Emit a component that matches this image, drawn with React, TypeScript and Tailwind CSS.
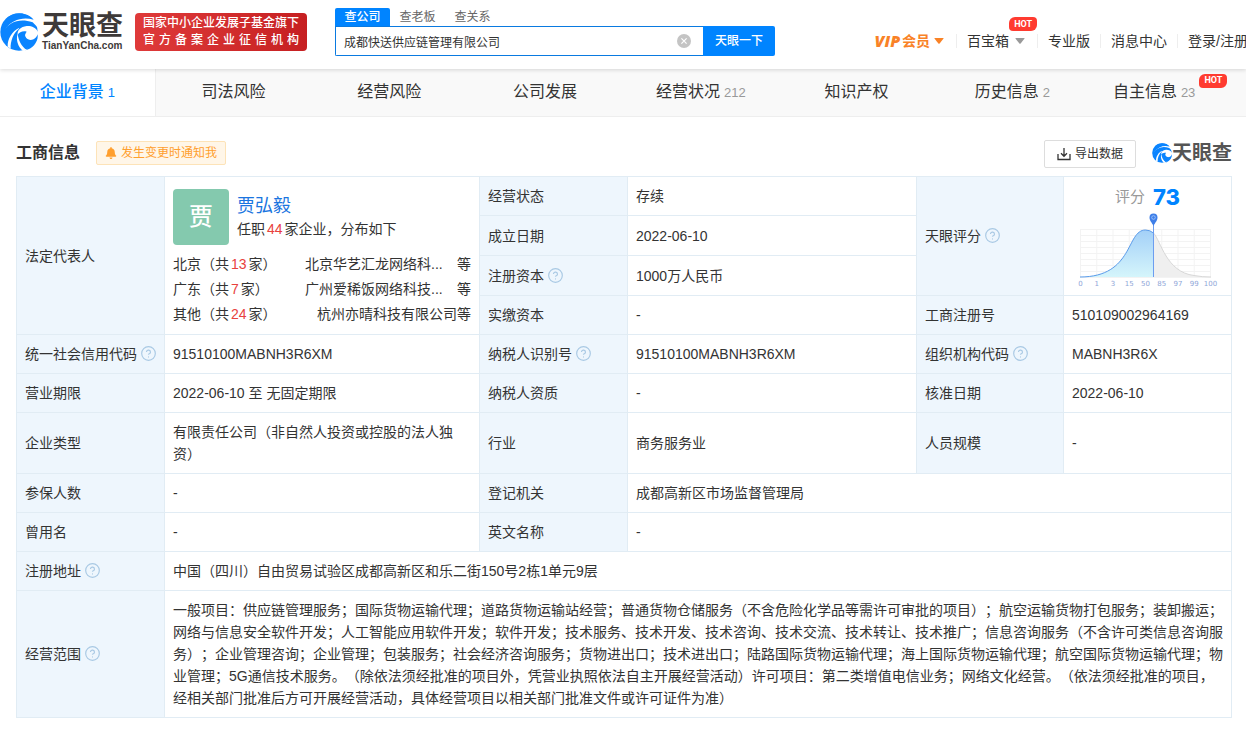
import React from "react";
import { HelpCircle } from "lucide-react";
import { FaBell } from "react-icons/fa";

const tabs = [
  { name: "企业背景", count: "1" },
  { name: "司法风险" },
  { name: "经营风险" },
  { name: "公司发展" },
  { name: "经营状况", count: "212" },
  { name: "知识产权" },
  { name: "历史信息", count: "2" },
  { name: "自主信息", count: "23", hot: true },
];

const regions = [
  { area: "北京", total: 13, company: "北京华艺汇龙网络科..." },
  { area: "广东", total: 7, company: "广州爱稀饭网络科技..." },
  { area: "其他", total: 24, company: "杭州亦晴科技有限公司", full: true },
];

const scope =
  "一般项目：供应链管理服务；国际货物运输代理；道路货物运输站经营；普通货物仓储服务（不含危险化学品等需许可审批的项目）；航空运输货物打包服务；装卸搬运；网络与信息安全软件开发；人工智能应用软件开发；软件开发；技术服务、技术开发、技术咨询、技术交流、技术转让、技术推广；信息咨询服务（不含许可类信息咨询服务）；企业管理咨询；企业管理；包装服务；社会经济咨询服务；货物进出口；技术进出口；陆路国际货物运输代理；海上国际货物运输代理；航空国际货物运输代理；物业管理；5G通信技术服务。（除依法须经批准的项目外，凭营业执照依法自主开展经营活动）许可项目：第二类增值电信业务；网络文化经营。（依法须经批准的项目，经相关部门批准后方可开展经营活动，具体经营项目以相关部门批准文件或许可证件为准）";

function LogoMark({ className }: { className: string }) {
  return (
    <svg viewBox="0 0 114 114" className={className} aria-hidden="true">
      <circle cx="57" cy="57" r="56" fill="#0a84ff" />
      <path d="M12 52C28 28 58 14 98 28L114 44V0L98 17C64 8 32 20 12 52Z" fill="#fff" />
      <path d="M20 15C46 -6 84 -2 101 20C66 10 36 22 14 48Z" fill="#0a84ff" />
      <path d="M114 56C108 44 94 38 80 39C62 41 51 52 53 66C58 57 69 53 80 56C74 61 73 70 78 76C86 86 102 86 114 74Z" fill="#fff" />
      <path d="M80 56C73 62 73 73 84 79C96 85 109 77 113 64C116 86 98 107 76 112C88 103 88 94 77 86C66 78 67 64 80 56Z" fill="#0a84ff" />
      <path d="M58 44C36 54 22 78 23 101L32 107C31 84 40 61 56 48Z" fill="#fff" />
      <path d="M53 62C47 80 54 101 68 113L80 111C64 99 55 82 53 62Z" fill="#fff" />
    </svg>
  );
}

function Hot({ className }: { className: string }) {
  return (
    <span
      className={`absolute flex h-3.5 w-7 items-center justify-center rounded-sm rounded-tl-md rounded-br-md bg-[#ff3b30] font-[Roboto] text-[9px] font-bold text-white ${className}`}
    >
      HOT
    </span>
  );
}

function Caret({ className }: { className: string }) {
  return (
    <svg viewBox="0 0 10 6" className={`h-1.5 w-2.5 ${className}`} aria-hidden="true">
      <path d="M1 0h8q1 0 .4.8L5.6 5.5q-.6.7-1.2 0L.6.8Q0 0 1 0z" fill="currentColor" />
    </svg>
  );
}

function Header() {
  return (
    <header className="relative z-10 flex h-[69px] bg-white shadow-[0_1px_4px_rgba(0,0,0,0.15)]">
      <a href="#" className="mt-[13px] flex h-[38px] w-[124px] shrink-0 items-center gap-1">
        <LogoMark className="size-[38px] shrink-0" />
        <span className="flex flex-col text-[#3e3a39]">
          <span className="text-[27px] leading-[27px] font-bold">天眼查</span>
          <span className="text-[10px] leading-[11px] font-bold">TianYanCha.com</span>
        </span>
      </a>
      <div className="mt-[13px] ml-[11px] flex h-[38px] w-[172px] shrink-0 flex-col justify-center rounded-sm bg-linear-to-r from-[#df3a3a] to-[#c61f21] px-2 text-xs leading-[17px] font-medium text-white">
        <span className="whitespace-nowrap">国家中小企业发展子基金旗下</span>
        <span className="[text-align-last:justify]">官方备案企业征信机构</span>
      </div>

      <form className="mt-2 ml-7 w-[440px] shrink-0 text-xs" onSubmit={(e) => e.preventDefault()}>
        <div className="flex h-[18px] text-[#666]">
          <button type="button" className="w-[55px] rounded-t-xs bg-[#0084ff] font-medium text-white">
            查公司
          </button>
          <button type="button" className="w-[55px]">
            查老板
          </button>
          <button type="button" className="w-[55px]">
            查关系
          </button>
        </div>
        <div className="flex h-[30px]">
          <div className="flex flex-1 items-center rounded-bl-xs border border-r-0 border-[#0a7ae0] pr-3 pl-2">
            <input
              type="text"
              aria-label="公司名称"
              defaultValue="成都快送供应链管理有限公司"
              className="h-full min-w-0 flex-1 text-[#333] outline-none"
            />
            <button type="button" aria-label="清除">
              <svg viewBox="0 0 14 14" className="size-3.5">
                <circle cx="7" cy="7" r="7" fill="#c4c4c4" />
                <path d="M4.4 4.4l5.2 5.2M9.6 4.4l-5.2 5.2" stroke="#fff" strokeWidth="1.2" />
              </svg>
            </button>
          </div>
          <button type="submit" className="w-[72px] rounded-r-xs bg-[#0084ff] font-medium text-white">
            天眼一下
          </button>
        </div>
      </form>

      <nav className="-mr-0.5 ml-auto flex shrink-0 items-center pt-3 text-sm whitespace-nowrap text-[#333]">
        <a href="#" className="mr-3 flex items-center font-bold text-[#f98226]">
          <span className="mr-0.5 font-['Open_Sans'] text-base leading-5 font-extrabold italic">VIP</span>
          会员
          <Caret className="ml-1" />
        </a>
        <a href="#" className="relative flex items-center border-l border-[#eee] pr-3 pl-2.5 leading-3.5">
          百宝箱
          <Caret className="ml-1.5 text-[#999]" />
          <Hot className="-top-[17px] right-0" />
        </a>
        <a href="#" className="border-l border-[#eee] px-2.5 leading-3.5">
          专业版
        </a>
        <a href="#" className="border-l border-[#eee] px-2.5 leading-3.5">
          消息中心
        </a>
        <a href="#" className="border-l border-[#eee] pl-2.5 leading-3.5">
          登录/注册
        </a>
      </nav>
    </header>
  );
}

function TabBar() {
  return (
    <nav className="grid h-12 grid-cols-8 border-b border-[#eee] bg-[#f9f9f9] text-base text-[#333]">
      {tabs.map((tab, i) => (
        <a
          key={tab.name}
          href="#"
          className={`flex items-center justify-center pb-0.5 ${
            i === 0 ? "border-r border-[#eee] bg-white font-medium text-[#0084ff]" : ""
          }`}
        >
          <span className={`relative ${tab.hot ? "mr-7" : ""}`}>
            {tab.name}
            {tab.count && (
              <span className={`ml-1 text-[13px] font-normal ${i === 0 ? "" : "text-[#999]"}`}>
                {tab.count}
              </span>
            )}
            {tab.hot && <Hot className="-top-1.5 left-full ml-1" />}
          </span>
        </a>
      ))}
    </nav>
  );
}

function Th({ children, help, rowSpan }: { children: React.ReactNode; help?: boolean; rowSpan?: number }) {
  return (
    <th
      scope="row"
      rowSpan={rowSpan}
      className="border border-[#e1ecf4] bg-[#eef6fd] px-2 py-2 text-left font-normal whitespace-nowrap"
    >
      {children}
      {help && (
        <HelpCircle
          viewBox="1 1 22 22"
          className="mb-[3px] ml-1 inline size-[15px] text-[#a9c9e4]"
          strokeWidth={1.7}
        />
      )}
    </th>
  );
}

function Td({ children, colSpan, rowSpan }: { children: React.ReactNode; colSpan?: number; rowSpan?: number }) {
  return (
    <td colSpan={colSpan} rowSpan={rowSpan} className="border border-[#e1ecf4] px-2 py-2">
      {children}
    </td>
  );
}

function Representative() {
  return (
    <div className="h-[141px] pt-1">
      <div className="flex gap-2">
        <div className="flex size-14 items-center justify-center rounded-sm bg-[#84c9ae] text-2xl font-medium text-white">
          贾
        </div>
        <div className="pt-[5px]">
          <a href="#" className="block text-lg leading-6 text-[#1a75e0]">
            贾弘毅
          </a>
          <p>
            任职<span className="mx-0.5 text-[#e8413d]">44</span>家企业，分布如下
          </p>
        </div>
      </div>
      <ul className="mt-[7px] leading-[25px]">
        {regions.map((r) => (
          <li key={r.area} className="flex justify-between whitespace-nowrap">
            <span>
              {r.area}（共<span className="mx-0.5 text-[#e8413d]">{r.total}</span>家）
            </span>
            <span className="flex w-[166px]">
              <a href="#" className={`flex-1 ${r.full ? "text-right" : ""}`}>
                {r.company}
              </a>
              等
            </span>
          </li>
        ))}
      </ul>
    </div>
  );
}

const axis = ["0", "1", "3", "15", "50", "85", "97", "99", "100"];

function Score() {
  return (
    <div className="h-[102px]">
      <p className="flex items-center justify-center gap-2 text-[15px] leading-6 text-[#999]">
        评分
        <strong className="font-[Inter] text-[22px] font-extrabold text-[#0084ff]">73</strong>
      </p>
      <svg viewBox="0 0 151 78" className="mt-0.5 h-[78px] w-full" role="img" aria-label="评分分布">
        <defs>
          <linearGradient id="fill" x1="0" y1="0" x2="0" y2="1">
            <stop offset="0" stopColor="#a3d0f8" />
            <stop offset="1" stopColor="#d5f5fb" />
          </linearGradient>
        </defs>
        {axis.map((label, i) => (
          <g key={label}>
            <path d={`M${8.5 + i * 16.25} 18V66`} stroke="#f3f3f3" />
            <text
              x={8.5 + i * 16.25}
              y="75"
              fontSize="7"
              fontFamily="DejaVu Sans"
              textAnchor="middle"
              fill="#8fa6d8"
            >
              {label}
            </text>
          </g>
        ))}
        {[18, 24, 30, 36, 42, 48, 54, 60, 66].map((y) => (
          <path key={y} d={`M8 ${y}.5H139`} stroke="#f3f3f3" />
        ))}
        <path d="M81.5 22C89 30 94 61 122 64.5Q130 66 139 66H81.5Z" fill="#efefef" />
        <path d="M81.5 22C89 30 94 61 122 64.5Q130 66 139 66" fill="none" stroke="#d8d8d8" />
        <path d="M8 66C62 66 54 19 73.5 19Q78 19 81.5 22V66Z" fill="url(#fill)" />
        <path d="M8 66C62 66 54 19 73.5 19Q78 19 81.5 22" fill="none" stroke="#5a9bea" />
        <rect x="81" y="12" width="1" height="54" fill="#6c9df0" />
        <path d="M81.5 15C79.5 11 77.5 9.5 77.5 6.5a4 4 0 0 1 8 0C85.500 9.500 83.500 11 81.500 15Z" fill="#3f7fe8" />
        <circle cx="81.5" cy="6.5" r="1.8" fill="#3f7fe8" stroke="#a8cbfb" strokeWidth=".8" />
      </svg>
    </div>
  );
}

function InfoTable() {
  return (
    <table className="w-full table-fixed border-collapse text-sm leading-[22px] text-[#333]">
      <colgroup>
        <col className="w-[148px]" />
        <col className="w-[315px]" />
        <col className="w-[148px]" />
        <col />
        <col className="w-[147px]" />
        <col className="w-[168px]" />
      </colgroup>
      <tbody>
        <tr className="h-[39px]">
          <Th rowSpan={4}>法定代表人</Th>
          <Td rowSpan={4}>
            <Representative />
          </Td>
          <Th>经营状态</Th>
          <Td>存续</Td>
          <Th rowSpan={3} help>
            天眼评分
          </Th>
          <Td rowSpan={3}>
            <Score />
          </Td>
        </tr>
        <tr className="h-10">
          <Th>成立日期</Th>
          <Td>2022-06-10</Td>
        </tr>
        <tr className="h-10">
          <Th help>注册资本</Th>
          <Td>1000万人民币</Td>
        </tr>
        <tr>
          <Th>实缴资本</Th>
          <Td>-</Td>
          <Th>工商注册号</Th>
          <Td>510109002964169</Td>
        </tr>
        <tr>
          <Th help>统一社会信用代码</Th>
          <Td>91510100MABNH3R6XM</Td>
          <Th help>纳税人识别号</Th>
          <Td>91510100MABNH3R6XM</Td>
          <Th help>组织机构代码</Th>
          <Td>MABNH3R6X</Td>
        </tr>
        <tr>
          <Th>营业期限</Th>
          <Td>2022-06-10 至 无固定期限</Td>
          <Th>纳税人资质</Th>
          <Td>-</Td>
          <Th>核准日期</Th>
          <Td>2022-06-10</Td>
        </tr>
        <tr>
          <Th>企业类型</Th>
          <Td>有限责任公司（非自然人投资或控股的法人独资）</Td>
          <Th>行业</Th>
          <Td>商务服务业</Td>
          <Th>人员规模</Th>
          <Td>-</Td>
        </tr>
        <tr>
          <Th>参保人数</Th>
          <Td>-</Td>
          <Th>登记机关</Th>
          <Td colSpan={3}>成都高新区市场监督管理局</Td>
        </tr>
        <tr>
          <Th>曾用名</Th>
          <Td>-</Td>
          <Th>英文名称</Th>
          <Td colSpan={3}>-</Td>
        </tr>
        <tr>
          <Th help>注册地址</Th>
          <Td colSpan={5}>中国（四川）自由贸易试验区成都高新区和乐二街150号2栋1单元9层</Td>
        </tr>
        <tr>
          <Th help>经营范围</Th>
          <Td colSpan={5}>{scope}</Td>
        </tr>
      </tbody>
    </table>
  );
}

export default function App() {
  return (
    <div
      lang="zh-CN"
      className="overflow-hidden bg-white pb-3 font-['Liberation_Sans','Noto_Sans_CJK_SC',sans-serif] [text-spacing-trim:space-all]"
    >
      <Header />
      <TabBar />
      <main className="pr-3.5 pl-4">
        <div className="flex h-[59px] items-center pt-3">
          <h1 className="text-base font-bold text-[#333]">工商信息</h1>
          <button
            type="button"
            className="ml-4 flex h-6 items-center gap-1 rounded-xs border border-[#fde3b8] bg-[#fff6e8] px-2 text-xs text-[#ff9f2e]"
          >
            <FaBell size={12} />
            发生变更时通知我
          </button>
          <button
            type="button"
            className="mt-0.5 ml-auto flex h-7 w-[92px] items-center justify-center gap-1 rounded-xs border border-[#ddd] text-xs text-[#333]"
          >
            <svg viewBox="0 0 14 14" className="size-3.5" fill="none" stroke="currentColor" strokeWidth="1.3">
              <path d="M1 7v5.5h12V7M7 1v8M4 6.3L7 9.3L10 6.3" />
            </svg>
            导出数据
          </button>
          <div className="ml-4 flex items-center text-[#555]">
            <LogoMark className="size-5" />
            <span className="text-xl leading-5 font-bold">天眼查</span>
          </div>
        </div>
        <InfoTable />
      </main>
    </div>
  );
}
